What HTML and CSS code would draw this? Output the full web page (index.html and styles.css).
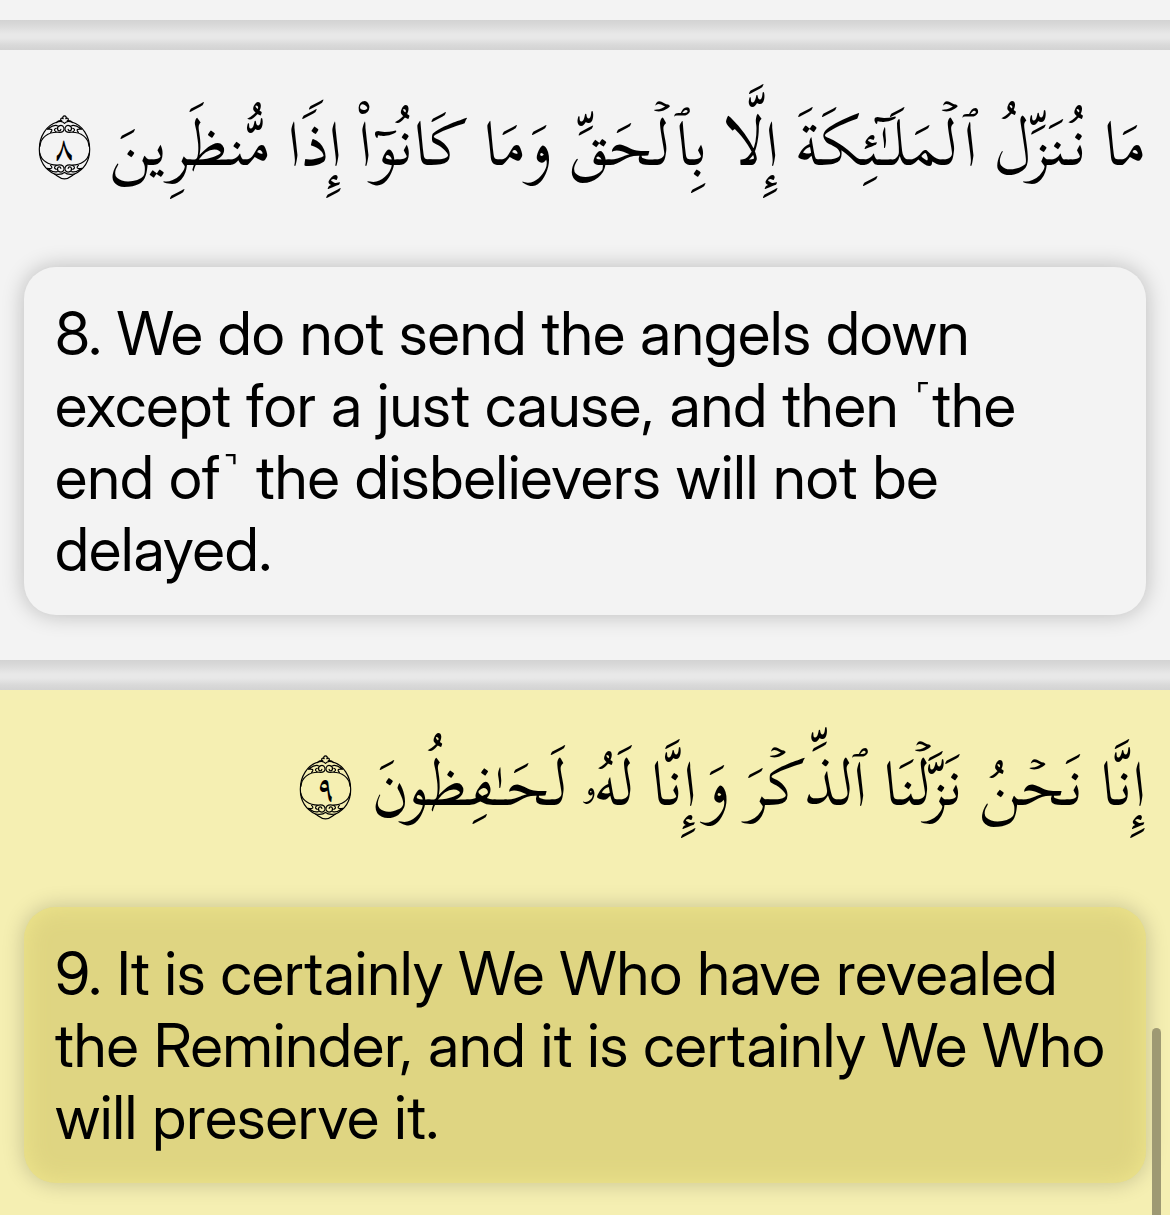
FILE: index.html
```html
<!DOCTYPE html>
<html lang="en">
<head>
<meta charset="utf-8">
<meta name="viewport" content="width=device-width, initial-scale=1">
<title>Al-Hijr 8–9</title>
<link rel="stylesheet" href="styles.css">
</head>
<body>
<svg class="defs" aria-hidden="true">
  <symbol id="ayah-frame" viewBox="50 42 160 196">
    <g fill="none" stroke="#000" stroke-width="3.6" stroke-linecap="round" stroke-linejoin="round">
      <path d="M108 63C76 72 54 106 54 145C54 181 73 207 101 221C110 226 116 235 130 235C144 235 150 226 159 221C187 207 206 181 206 145C206 106 184 72 152 63"/>
      <path d="M106 65C111 59 117 58 122 60C114 54 121 49 126 53C120 42 140 42 134 53C139 49 146 54 138 60C143 58 149 59 154 65M108 63C118 60 125 61 130 67C135 61 142 60 152 63"/>
      <path d="M56 136C58 110 80 93 110 94C124 96 131 90 128 80C124 69 107 73 109 85C111 92 118 90 119 85M110 94C98 93 97 84 105 82M108 74C96 70 88 78 78 85C91 83 96 86 88 94"/>
      <path d="M204 136C202 110 180 93 150 94C136 96 129 90 132 80C136 69 153 73 151 85C149 92 142 90 141 85M150 94C162 93 163 84 155 82M152 74C164 70 172 78 182 85C169 83 164 86 172 94"/>
      <path d="M55 156C59 178 80 194 110 193C124 191 131 198 128 208C124 218 107 215 109 203C111 196 118 198 119 203M110 193C98 195 97 203 105 206M108 213C96 217 88 210 78 203C91 205 96 202 88 194"/>
      <path d="M205 156C201 178 180 194 150 193C136 191 129 198 132 208C136 218 153 215 151 203C149 196 142 198 141 203M150 193C162 195 163 203 155 206M152 213C164 217 172 210 182 203C169 205 164 202 172 194"/>
      <path d="M100 220C112 222 124 221 130 215C136 221 148 222 160 220"/>
    </g>
  </symbol>
</svg>
<main class="reader">
  <section class="verse verse-previous"></section>
  <div class="divider"></div>
  <section class="verse">
    <p class="arabic" lang="ar" dir="rtl">
      <span class="words">مَا نُنَزِّلُ ٱلۡمَلَـٰٓئِكَةَ إِلَّا بِٱلۡحَقِّ وَمَا كَانُوٓا۟ إِذࣰا مُّنظَرِينَ</span>
      <span class="ayah"><svg class="frame" aria-hidden="true"><use href="#ayah-frame"/></svg><span class="number">٨</span></span>
    </p>
    <p class="translation">8. We do not send the angels down except for a just cause, and then <span class="bracket">˹</span>the end of<span class="bracket">˺</span> the disbelievers will not be delayed.</p>
  </section>
  <div class="divider"></div>
  <section class="verse selected">
    <p class="arabic" lang="ar" dir="rtl">
      <span class="words">إِنَّا نَحۡنُ نَزَّلۡنَا ٱلذِّكۡرَ وَإِنَّا لَهُۥ لَحَـٰفِظُونَ</span>
      <span class="ayah"><svg class="frame" aria-hidden="true"><use href="#ayah-frame"/></svg><span class="number">٩</span></span>
    </p>
    <p class="translation">9. It is certainly We Who have revealed the Reminder, and it is certainly We Who will preserve it.</p>
  </section>
</main>
<div class="scroll-thumb"></div>
</body>
</html>
```
FILE: styles.css
```css
* { box-sizing: border-box; }
body {
  margin: 0;
  background: #f3f3f3;
  color: #000;
  font-family: "Inter Display", Inter, "Liberation Sans", sans-serif;
}
p { margin: 0; }
.defs { display: none; }
.reader {
  height: 100vh;
  overflow: hidden;
}
.verse {
  padding: 25px 24px 45px;
  background: #f3f3f3;
}
.verse-previous { padding: 20px 0 0; }
.selected { background: #f5efb2; }
.divider {
  height: 30px;
  background: linear-gradient(#d3d3d3, #d9d9d9 5px, #e8e8e8 14px, #e8e8e8 18px, #d9d9d9 25px, #d3d3d3);
}
.arabic {
  display: flex;
  align-items: center;
  gap: 20px;
  height: 144px;
  margin-bottom: 48px;
  font-family: "Scheherazade New", Scheherazade, "Noto Naskh Arabic", "DejaVu Sans", serif;
  font-size: 63px;
  line-height: 96px;
  white-space: nowrap;
}
.words { padding-bottom: 4px; }
.ayah {
  display: grid;
  place-items: center;
  flex: none;
}
.ayah > * { grid-area: 1 / 1; }
.frame {
  width: 53px;
  height: 65px;
}
.number {
  font-size: 34px;
  font-weight: 500;
  line-height: 48px;
}
.translation {
  padding: 30px 31px;
  border-radius: 32px;
  background: #f3f3f3;
  box-shadow: 0 0 22px rgba(0, 0, 0, 0.24);
  font-size: 60px;
  line-height: 72px;
}
.bracket {
  padding: 0 5px;
  font-weight: 200;
}
.selected .translation {
  background: #dfd582;
  box-shadow: 0 0 22px rgba(0, 0, 0, 0.2), inset 0 0 24px #efe68c;
}
.scroll-thumb {
  position: fixed;
  right: 9px;
  bottom: 0;
  width: 9px;
  height: 187px;
  border-radius: 5px 5px 0 0;
  background: #9e9973;
}
```
